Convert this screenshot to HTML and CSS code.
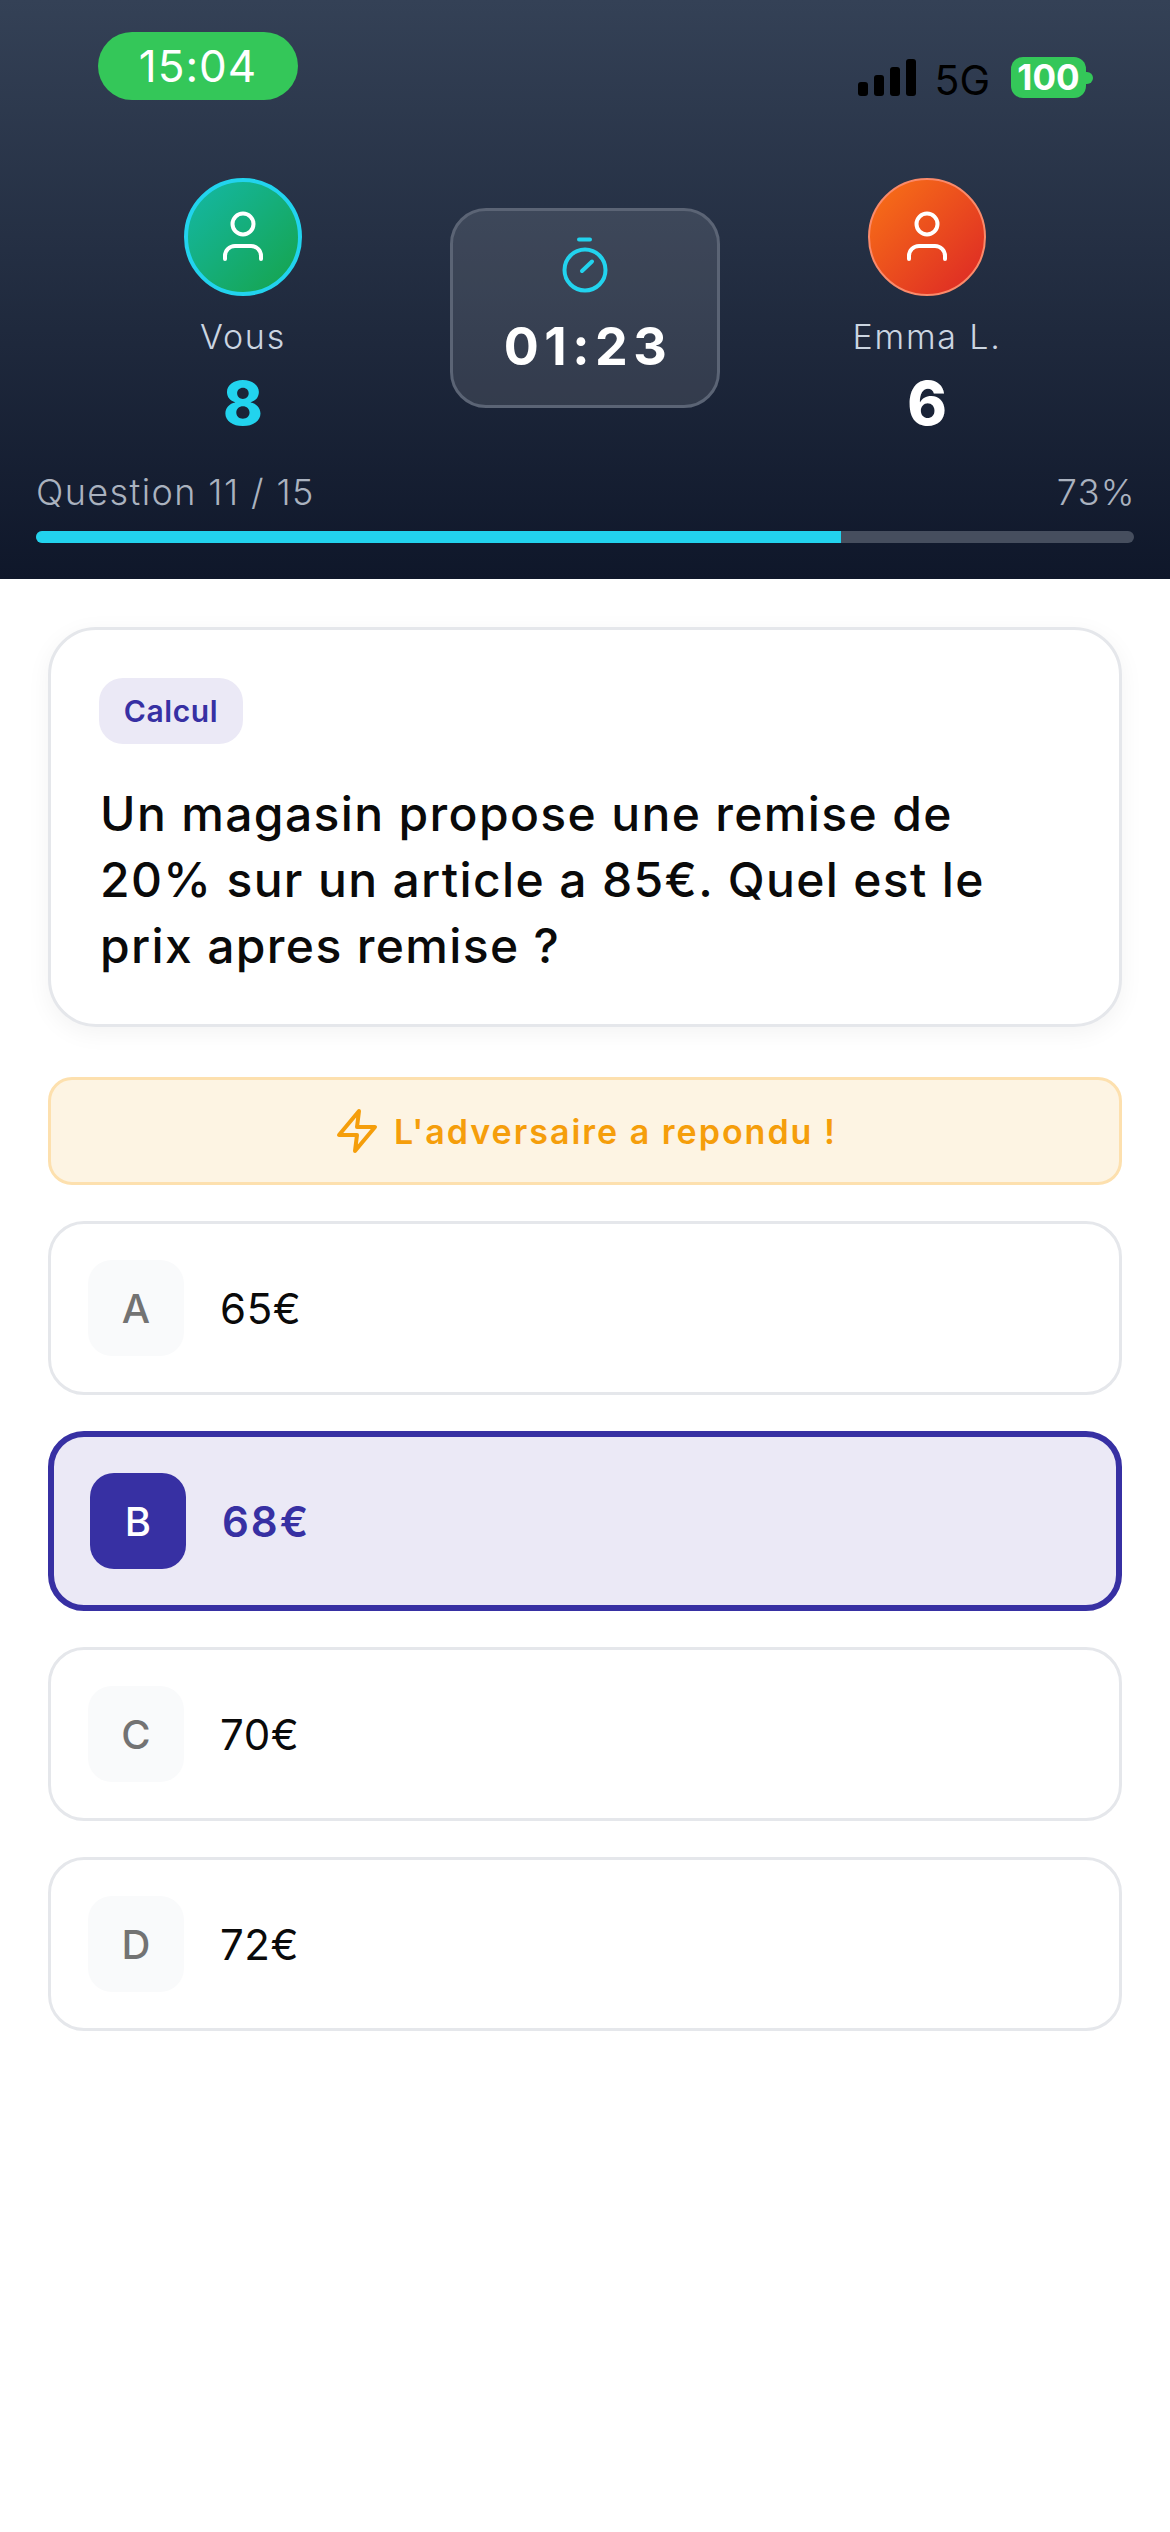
FILE: index.html
```html
<!DOCTYPE html>
<html lang="fr">
<head>
<meta charset="utf-8">
<title>Duel</title>
<link rel="stylesheet" href="styles.css">
</head>
<body>
<header class="header">
  <div class="status">
    <div class="clock">15:04</div>
    <div class="status-right">
      <div class="signal"><i class="b1"></i><i class="b2"></i><i class="b3"></i><i class="b4"></i></div>
      <span class="net">5G</span>
      <div class="battery"><span class="level">100</span><i class="nub"></i></div>
    </div>
  </div>
  <div class="duel">
    <div class="player">
      <div class="avatar me">
        <svg class="person" viewBox="0 0 44 54"><circle cx="22" cy="14" r="10.500"/><path d="M4 49v-3a10 10 0 0 1 10-10h16a10 10 0 0 1 10 10v3"/></svg>
      </div>
      <div class="name">Vous</div>
      <div class="score cyan">8</div>
    </div>
    <div class="timer">
      <svg class="watch" viewBox="0 0 46 56"><path d="M17 2.500h11"/><path d="M20 34l10-9.500"/><circle cx="23" cy="33" r="20.500"/></svg>
      <div class="time">01:23</div>
    </div>
    <div class="player">
      <div class="avatar foe">
        <svg class="person" viewBox="0 0 44 54"><circle cx="22" cy="14" r="10.500"/><path d="M4 49v-3a10 10 0 0 1 10-10h16a10 10 0 0 1 10 10v3"/></svg>
      </div>
      <div class="name">Emma L.</div>
      <div class="score">6</div>
    </div>
  </div>
  <div class="progress-labels"><span>Question 11 / 15</span><span>73%</span></div>
  <div class="track"><div class="fill" style="width:73.3%"></div></div>
</header>
<main class="content">
  <section class="card">
    <span class="tag">Calcul</span>
    <p class="question">Un magasin propose une remise de 20% sur un article a 85€. Quel est le prix apres remise ?</p>
  </section>
  <div class="alert">
    <svg class="zap" viewBox="0 0 24 24"><polygon points="13 2 3 14 12 14 11 22 21 10 12 10 13 2"/></svg>
    <span>L'adversaire a repondu !</span>
  </div>
  <div class="options">
    <div class="option"><span class="letter">A</span><span class="value">65€</span></div>
    <div class="option selected"><span class="letter">B</span><span class="value">68€</span></div>
    <div class="option"><span class="letter">C</span><span class="value">70€</span></div>
    <div class="option"><span class="letter">D</span><span class="value">72€</span></div>
  </div>
</main>
</body>
</html>
```
FILE: styles.css
```css
* { box-sizing: border-box; }
html, body { margin: 0; padding: 0; }
body { width: 1170px; height: 2532px; background: #fff; font-family: Inter, "Liberation Sans", sans-serif; overflow: hidden; }

.header { height: 579px; padding: 32px 36px 0; background: linear-gradient(180deg, #344156 0%, #0f172a 100%); }

.status { display: flex; justify-content: space-between; height: 68px; padding: 0 48px 0 62px; }
.clock { width: 200px; height: 68px; border-radius: 34px; background: #34c759; color: #fff; font-size: 44px; line-height: 68px; letter-spacing: 1px; text-align: center; }
.status-right { display: flex; align-items: flex-start; padding-top: 25px; }
.signal { display: flex; align-items: flex-end; gap: 6px; height: 37px; margin-top: 2px; }
.signal i { display: block; width: 10px; border-radius: 3px; background: #000; }
.b1 { height: 14px; }
.b2 { height: 21px; }
.b3 { height: 29px; }
.b4 { height: 37px; }
.net { margin-left: 18px; color: #000; font-size: 41px; line-height: 44px; margin-top: 1px; }
.battery { position: relative; width: 75px; height: 41px; margin-left: 21px; border-radius: 12px; background: #34c759; color: #fff; font-size: 35px; font-weight: 700; line-height: 41px; text-align: center; }
.nub { position: absolute; top: 15px; right: -7px; width: 7px; height: 12px; border-radius: 0 6px 6px 0; background: #34c759; }

.duel { display: flex; justify-content: space-between; align-items: flex-start; height: 293px; margin-top: 78px; padding: 0 122px; }
.player { display: flex; flex-direction: column; align-items: center; width: 170px; }
.avatar { display: flex; align-items: center; justify-content: center; width: 118px; height: 118px; border-radius: 50%; }
.me { border: 4px solid #22d3ee; background: linear-gradient(135deg, #14b8a6, #16a34a); }
.foe { border: 2px solid #fb8a6a; background: linear-gradient(135deg, #f97316, #dc2626); }
.person { width: 44px; height: 54px; fill: none; stroke: #fff; stroke-width: 4; stroke-linecap: round; }
.name { margin-top: 20px; color: #cbd5e1; font-size: 34px; line-height: 42px; letter-spacing: 1.800px; font-weight: 300; white-space: nowrap; }
.score { margin-top: 9px; color: #fff; font-size: 60px; font-weight: 800; line-height: 72px; }
.cyan { color: #22d3ee; }

.timer { display: flex; flex-direction: column; align-items: center; flex: none; width: 270px; height: 200px; margin-top: 30px; padding-top: 26px; border: 3px solid #5b6475; border-radius: 36px; background: rgba(255, 255, 255, 0.11); }
.watch { width: 46px; height: 56px; fill: none; stroke: #22d3ee; stroke-width: 4; stroke-linecap: round; }
.time { margin-top: 23px; padding-left: 6px; color: #fff; font-size: 52px; font-weight: 700; line-height: 62px; letter-spacing: 5.500px; }

.progress-labels { display: flex; justify-content: space-between; height: 42px; margin-right: -2px; color: #aab2bf; font-size: 36px; font-weight: 300; line-height: 42px; letter-spacing: 1.400px; }
.track { height: 12px; margin-top: 18px; border-radius: 6px; background: #464e5e; overflow: hidden; }
.fill { height: 100%; background: #22d3ee; }

.content { padding: 48px; }
.card { height: 400px; padding: 48px; border: 3px solid #e5e7eb; border-radius: 48px; background: #fff; box-shadow: 0 6px 24px rgba(0, 0, 0, 0.05); }
.tag { display: block; width: 144px; height: 66px; border-radius: 24px; background: #ebe9f6; color: #3730a3; font-size: 30px; font-weight: 600; line-height: 66px; letter-spacing: 0.6px; text-align: center; }
.question { max-width: 930px; margin: 37px 0 0 1px; color: #0a0a0a; font-size: 48px; font-weight: 500; line-height: 66px; letter-spacing: 1.350px; }

.alert { display: flex; align-items: center; justify-content: center; gap: 13px; height: 108px; margin-top: 50px; border: 3px solid #fde0ae; border-radius: 24px; background: #fdf4e3; color: #f59e0b; font-size: 34px; font-weight: 600; letter-spacing: 2px; }
.zap { width: 48px; height: 48px; fill: none; stroke: #f59e0b; stroke-width: 2; stroke-linejoin: round; stroke-linecap: round; }

.options { display: flex; flex-direction: column; gap: 36px; margin-top: 36px; }
.option { display: flex; align-items: center; gap: 36px; height: 174px; padding: 0 37px; border: 3px solid #e5e7eb; border-radius: 36px; background: #fff; }
.letter { display: flex; align-items: center; justify-content: center; width: 96px; height: 96px; border-radius: 24px; background: #f9fafb; color: #737373; font-size: 40px; font-weight: 500; }
.value { color: #0a0a0a; font-size: 42px; letter-spacing: 0.6px; }
.selected { height: 180px; padding: 0 36px; border: 6px solid #3730a3; background: #ebe9f6; }
.selected .letter { background: #3730a3; color: #fff; }
.selected .value { color: #3730a3; font-weight: 600; letter-spacing: 2px; }
```
